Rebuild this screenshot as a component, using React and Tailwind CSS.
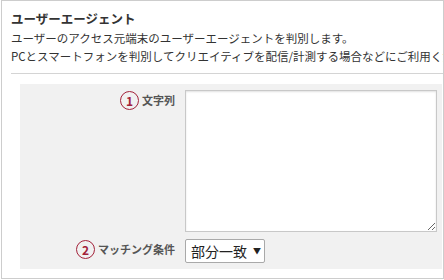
import React from 'react';

const jp = { fontFamily: '"Noto Sans CJK JP", "Noto Sans", sans-serif' };

const Num = ({ n }) => (
  <span className="w-[19px] h-[19px] shrink-0 rounded-full border-[1.5px] border-[#a3223a] text-[#a3223a] text-[12px] font-bold leading-none flex items-center justify-center">
    {n}
  </span>
);

const App = () => {
  return (
    <div className="w-[444px] h-[280px] bg-white" style={jp}>
      <div className="ml-px w-[443px] h-[279px] border border-[#cdcdcd] overflow-hidden pl-[9px] pt-[8px] flex flex-col">
        {/* Heading */}
        <h2 className="text-[12.5px] font-bold leading-[20px] text-[#333]">ユーザーエージェント</h2>
        <div className="text-[11.5px] leading-[17.5px] text-[#333] whitespace-nowrap mt-[1px]">
          <p>ユーザーのアクセス元端末のユーザーエージェントを判別します。</p>
          <p>PCとスマートフォンを判別してクリエイティブを配信/計測する場合などにご利用ください。</p>
        </div>
        <div className="mt-[8px] border-t border-[#d4d4d4]" />

        {/* Form panel */}
        <div className="mt-[10px] ml-[9px] mr-px bg-[#f1f1f1] pt-[6px] pb-[6px]">
          <div className="flex">
            <div className="w-[165px] pr-[10px] flex justify-end items-center gap-[3px] self-start mt-px">
              <Num n="1" />
              <span className="text-[11px] font-bold text-[#555]">文字列</span>
            </div>
            <textarea className="w-[252px] h-[142px] bg-white border border-[#c8c8c8] shadow-[inset_0_1px_2px_rgba(0,0,0,0.12)] outline-none" />
          </div>
          <div className="flex mt-[7px]">
            <div className="w-[165px] pr-[10px] flex justify-end items-center gap-[3px] self-start mt-px">
              <Num n="2" />
              <span className="text-[11px] font-bold text-[#555]">マッチング条件</span>
            </div>
            <div className="w-[80px] h-[24px] bg-white border border-[#a9a9a9] rounded-[2px] flex items-center pl-[5px] text-[14px] text-[#222]">
              <span>部分一致</span>
              <span className="ml-[6px] text-[8px]">▼</span>
            </div>
          </div>
        </div>
      </div>
    </div>
  );
};

export default App;
